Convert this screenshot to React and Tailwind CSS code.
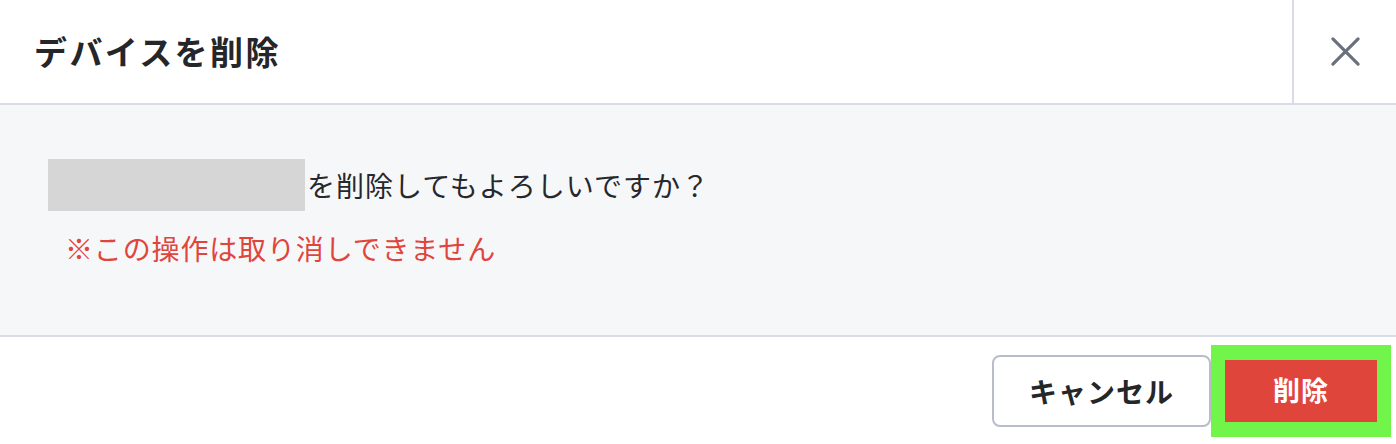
import React from "react";

export default function App() {
  const font = { fontFamily: '"Noto Sans CJK JP", "Noto Sans", sans-serif' };
  return (
    <div className="w-[1396px] h-[444px] bg-white flex flex-col overflow-hidden" style={font}>
      <div className="h-[105px] flex items-stretch border-b-2 border-[#d9dce4]">
        <div className="flex-1 flex items-center pl-[34px]">
          <h1 className="text-[33px] font-bold text-[#25262a] tracking-[2.4px]">デバイスを削除</h1>
        </div>
        <div className="w-[104px] border-l-2 border-[#d9dce4] flex items-center justify-center">
          <svg width="31" height="31" viewBox="0 0 32 32" fill="none" stroke="#6b707c" strokeWidth="3.3" strokeLinecap="round">
            <path d="M3 3L29 29M29 3L3 29" />
          </svg>
        </div>
      </div>
      <div className="h-[232px] bg-[#f6f7f9] border-b-2 border-[#d9dce4] pt-[54px] pl-[48px]">
        <div className="flex items-center">
          <div className="w-[257px] h-[52px] bg-[#d6d6d6]"></div>
          <span className="text-[28px] text-[#27282c] ml-[2px] tracking-[1px]">を削除してもよろしいですか？</span>
        </div>
        <div className="mt-[16px] pl-[17px] text-[28px] text-[#e0453c] tracking-[0.85px]">※この操作は取り消しできません</div>
      </div>
      <div className="flex-1 flex items-center justify-end pr-[5px]">
        <button className="w-[219px] h-[72px] rounded-[8px] border-2 border-[#b9bdc9] bg-white text-[28px] font-bold text-[#25262a] tracking-[1px]">キャンセル</button>
        <div className="bg-[#72f54a] p-[14px] py-[15px]">
          <button className="w-[152px] h-[62px] bg-[#e0453c] text-white text-[27px] font-bold tracking-[1px]">削除</button>
        </div>
      </div>
    </div>
  );
}
